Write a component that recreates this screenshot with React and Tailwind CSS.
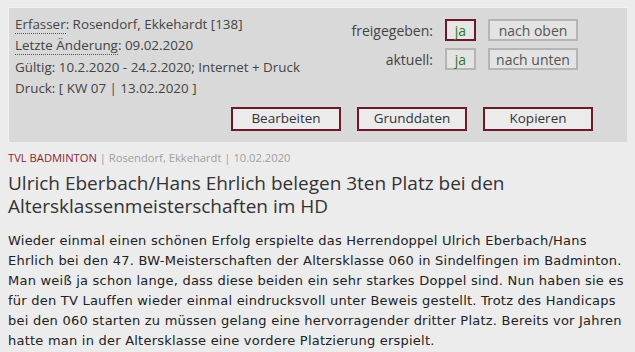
import React from 'react';

const MetaLabel = ({ children }) => (
  <span className="border-b border-dotted border-[#555]">{children}</span>
);

const RedButton = ({ children, className = '' }) => (
  <button className={`h-[24px] border-2 border-[#6a1a28] bg-[#ebebeb] text-[13.5px] text-[#333] leading-none ${className}`}>
    {children}
  </button>
);

export default function App() {
  return (
    <div className="w-[635px] h-[352px] overflow-hidden bg-[#ececec] px-2 pt-[7px] text-[#333]">
      {/* Info panel */}
      <div className="bg-[#d9d9d9] border-t border-l border-[#f2f2f2] h-[135px] w-[619px] pl-[6px] pr-[34px] pt-[6px] font-['Open_Sans',sans-serif] text-[14px]">
        <div className="flex justify-between items-start">
          <div className="leading-[21.3px] text-[13.4px] text-[#444]">
            <div><MetaLabel>Erfasser</MetaLabel>: Rosendorf, Ekkehardt [138]</div>
            <div><MetaLabel>Letzte Änderung</MetaLabel>: 09.02.2020</div>
            <div>Gültig: 10.2.2020 - 24.2.2020; Internet + Druck</div>
            <div>Druck: [ KW 07 | 13.02.2020 ]</div>
          </div>
          <div className="grid grid-cols-[auto_31px_90px] gap-x-[12px] gap-y-[7px] items-center content-start pt-[5px] pr-[15px]">
            <span className="text-right text-[#444]">freigegeben:</span>
            <span className="h-[22px] border-2 border-[#6a1a28] text-[#2f7a2f] flex items-center justify-center bg-[#e6e6e6]">ja</span>
            <span className="h-[22px] border-2 border-[#b5b5b5] text-[#555] flex items-center justify-center bg-[#e3e3e3]">nach oben</span>
            <span className="text-right text-[#444]">aktuell:</span>
            <span className="h-[22px] border-2 border-[#b5b5b5] text-[#2f7a2f] flex items-center justify-center bg-[#e3e3e3]">ja</span>
            <span className="h-[22px] border-2 border-[#b5b5b5] text-[#555] flex items-center justify-center bg-[#e3e3e3]">nach unten</span>
          </div>
        </div>
        <div className="flex justify-end gap-[16px] mt-[8px]">
          <RedButton className="w-[110px]">Bearbeiten</RedButton>
          <RedButton className="w-[110px]">Grunddaten</RedButton>
          <RedButton className="w-[110px]">Kopieren</RedButton>
        </div>
      </div>

      {/* Article */}
      <div className="mt-[8px] font-['Open_Sans',sans-serif] text-[11.2px] leading-[16px] text-[#a0a0a0]">
        <span className="text-[#8a1f2e]">TVL BADMINTON</span> | Rosendorf, Ekkehardt | 10.02.2020
      </div>
      <h1 className="mt-[6px] font-['Open_Sans',sans-serif] text-[19px] leading-[23px] text-[#333]">
        <div>Ulrich Eberbach/Hans Ehrlich belegen 3ten Platz bei den</div>
        <div>Altersklassenmeisterschaften im HD</div>
      </h1>
      <p className="mt-[13px] font-['DejaVu_Sans',Verdana,sans-serif] text-[13px] tracking-[0.23px] leading-[20px] text-[#222]">
        Wieder einmal einen schönen Erfolg erspielte das Herrendoppel Ulrich Eberbach/Hans<br />
        Ehrlich bei den 47. BW-Meisterschaften der Altersklasse 060 in Sindelfingen im Badminton.<br />
        Man weiß ja schon lange, dass diese beiden ein sehr starkes Doppel sind. Nun haben sie es<br />
        für den TV Lauffen wieder einmal eindrucksvoll unter Beweis gestellt. Trotz des Handicaps<br />
        bei den 060 starten zu müssen gelang eine hervorragender dritter Platz. Bereits vor Jahren<br />
        hatte man in der Altersklasse eine vordere Platzierung erspielt.
      </p>
    </div>
  );
}
